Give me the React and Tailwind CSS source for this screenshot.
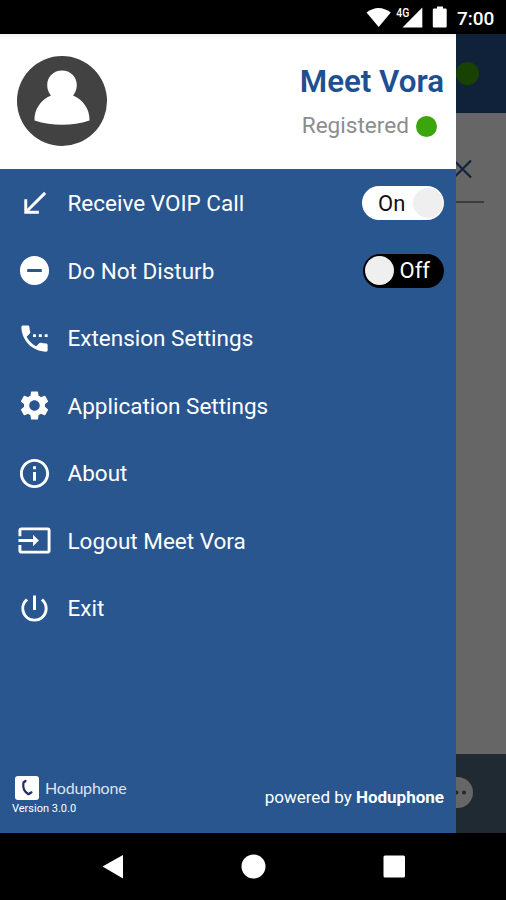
import {
  MdCallReceived,
  MdInfoOutline,
  MdInput,
  MdPowerSettingsNew,
  MdRemoveCircle,
  MdSettings,
  MdSettingsPhone,
} from "react-icons/md";

const menuItems = [
  { label: "Receive VOIP Call", icon: MdCallReceived, toggle: "on" },
  { label: "Do Not Disturb", icon: MdRemoveCircle, toggle: "off" },
  { label: "Extension Settings", icon: MdSettingsPhone },
  { label: "Application Settings", icon: MdSettings },
  { label: "About", icon: MdInfoOutline },
  { label: "Logout Meet Vora", icon: MdInput },
  { label: "Exit", icon: MdPowerSettingsNew },
];

function StatusBar() {
  return (
    <div className="flex h-[34px] shrink-0 items-center bg-black pl-[366px] text-white">
      <svg className="h-[34px] w-[88px]" viewBox="366 0 88 34" fill="currentColor">
        {/* wifi */}
        <path d="M366.5 12.5Q378.5 3.5 390.8 12.5L378.7 27Z" />
        {/* signal */}
        <path d="M422.3 7.5V27.5H402.5Z" />
        <text
          x="396.3"
          y="16.5"
          fontSize="12"
          fontWeight="500"
          textLength="13"
          lengthAdjust="spacingAndGlyphs"
          fontFamily="Roboto, sans-serif"
          stroke="#000"
          strokeWidth="2"
          paintOrder="stroke"
        >
          4G
        </text>
        {/* battery */}
        <path d="M437 6.5h6v2h2.5q1.2 0 1.2 1.2v16.6q0 1.2-1.2 1.2h-11.5q-1.2 0-1.2-1.2V9.7q0-1.2 1.2-1.2h3z" />
      </svg>
      <span className="pt-[2px] pl-[3px] text-[19px] font-medium leading-none">7:00</span>
    </div>
  );
}

function Avatar() {
  return (
    <svg className="h-[90px] w-[90px]" viewBox="0 0 90 90">
      <circle cx="45" cy="45" r="45" fill="#424242" />
      <path
        fill="#fff"
        d="M45 14.5c8.5 0 14.8 6.3 14.8 14.5 0 4.5-1.3 7.5-3.8 10.5C66 43.5 73 53.5 72.5 64.5Q59 68.8 45 68.8T17.5 64.5C17 53.5 24 43.5 34 39.5c-2.5-3-3.8-6-3.8-10.5C30.2 20.8 36.5 14.5 45 14.5z"
      />
    </svg>
  );
}

function Toggle({ state }) {
  if (state === "on") {
    return (
      <div className="flex h-[34px] w-[82px] items-center justify-between rounded-full bg-white pr-[1px] pl-4 text-[22px] text-[#111]">
        On
        <span className="h-[30px] w-[30px] rounded-full bg-[#efefef]" />
      </div>
    );
  }
  return (
    <div className="flex h-[34px] w-[81px] items-center justify-between rounded-full bg-black pr-[14px] pl-[2px] text-[22px] text-white">
      <span className="h-[29px] w-[29px] rounded-full bg-[#efefef]" />
      Off
    </div>
  );
}

function MenuItem({ item }) {
  const Icon = item.icon;
  return (
    <li className="flex h-[67.5px] items-center pr-3 pl-[16.5px]">
      <Icon className="h-[35px] w-[35px]" />
      <span className="ml-4 flex-1 pt-[1.5px] text-[22.5px]">{item.label}</span>
      {item.toggle && <Toggle state={item.toggle} />}
    </li>
  );
}

function Drawer() {
  return (
    <aside className="flex w-[456px] shrink-0 flex-col bg-[#29568f] text-white">
      <div className="flex h-[135px] shrink-0 items-start justify-between bg-white bg-linear-to-b from-[#f4f4f4] to-white to-5% pr-3 pl-[17.4px]">
        <div className="pt-[22px]">
          <Avatar />
        </div>
        <div className="pt-[30px] text-right">
          <div className="text-[31.3px] font-semibold leading-9 text-[#1d4f91]">Meet Vora</div>
          <div className="mt-[13px] flex items-center justify-end gap-[7px] pr-[7px] text-[22.6px] leading-[26px] text-[#8a8d91]">
            Registered
            <span className="h-[21px] w-[21px] rounded-full bg-[#3aa60b]" />
          </div>
        </div>
      </div>

      <ul className="flex-1 pt-[0.5px]">
        {menuItems.map((item) => (
          <MenuItem key={item.label} item={item} />
        ))}
      </ul>

      <div className="flex items-end justify-between pr-3 pb-[18px] pl-3">
        <div>
          <div className="flex items-center gap-[6px] pl-[3px]">
            <svg className="h-6 w-6" viewBox="0 0 24 24">
              <rect width="24" height="24" rx="3" fill="#fff" />
              <path
                d="M8.5 6.5L10.5 5M8.5 6.5C7.5 11.5 9.5 16 13.5 18.2L16.5 16.3"
                fill="none"
                stroke="#232b6b"
                strokeWidth="2.2"
                strokeLinecap="round"
                strokeLinejoin="round"
              />
            </svg>
            <span className="font-['Lato'] text-[16px] leading-6 tracking-[-0.2px] text-[#dbe4f2]">Hoduphone</span>
          </div>
          <div className="mt-[2px] text-[11px] leading-[13px]">Version 3.0.0</div>
        </div>
        <div className="pb-2 text-[17px] leading-5">
          powered by <b className="font-bold">Hoduphone</b>
        </div>
      </div>
    </aside>
  );
}

// Strip of the dialer screen that stays visible beside the open drawer
function DimmedScreen() {
  return (
    <div className="flex flex-1 flex-col overflow-hidden bg-[#666]">
      <div className="h-[79px] bg-[#102239] pt-[28px]">
        <div className="h-[23px] w-[23px] rounded-full bg-[#174204]" />
      </div>
      <div className="flex-1">
        <svg
          className="mt-[46px] h-5 w-5"
          viewBox="0 0 20 20"
          fill="none"
          stroke="#10233f"
          strokeWidth="2.2"
        >
          <path d="M-2 1.5L15 18.5M15 1.5L-2 18.5" />
        </svg>
        <div className="mt-[22px] h-[2px] w-7 bg-[#3c3c3c]" />
      </div>
      <div className="h-[79px] bg-[#202a33] pt-[23px]">
        <svg className="h-[31px] w-[18px]" viewBox="0 0 18 31">
          <circle cx="1.5" cy="15.5" r="15.5" fill="#666" />
          <circle cx="0.5" cy="15.5" r="2" fill="#202a33" />
          <circle cx="8" cy="15.5" r="2" fill="#202a33" />
        </svg>
      </div>
    </div>
  );
}

function NavBar() {
  return (
    <div className="flex h-[67px] shrink-0 items-center justify-center bg-black text-white">
      <svg className="h-[67px] w-[310px]" viewBox="98 833 310 67" fill="currentColor">
        <path d="M102.5 866.5L123 855v23.5z" />
        <circle cx="253.5" cy="866.5" r="12" />
        <rect x="383.5" y="855.5" width="21.5" height="22" rx="1.5" />
      </svg>
    </div>
  );
}

export default function App() {
  return (
    <div className="flex h-[900px] w-[506px] flex-col overflow-hidden font-['Roboto',sans-serif]">
      <StatusBar />
      <div className="flex flex-1">
        <Drawer />
        <DimmedScreen />
      </div>
      <NavBar />
    </div>
  );
}
